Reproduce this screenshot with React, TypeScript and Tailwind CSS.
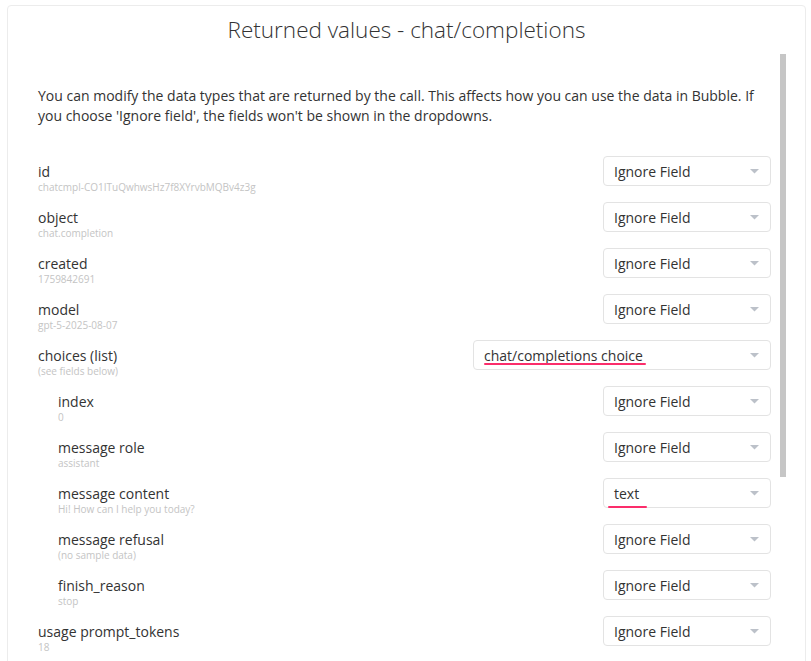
interface Field {
  label: string
  sample: string
  value: string
  nested?: boolean
  wide?: boolean
  mark?: string
}

const fields: Field[] = [
  { label: "id", sample: "chatcmpl-CO1ITuQwhwsHz7f8XYrvbMQBv4z3g", value: "Ignore Field" },
  { label: "object", sample: "chat.completion", value: "Ignore Field" },
  { label: "created", sample: "1759842691", value: "Ignore Field" },
  { label: "model", sample: "gpt-5-2025-08-07", value: "Ignore Field" },
  {
    label: "choices (list)",
    sample: "(see fields below)",
    value: "chat/completions choice",
    wide: true,
    mark: "left-[10px] top-[22px] w-[162px]",
  },
  { label: "index", sample: "0", value: "Ignore Field", nested: true },
  { label: "message role", sample: "assistant", value: "Ignore Field", nested: true },
  {
    label: "message content",
    sample: "Hi! How can I help you today?",
    value: "text",
    nested: true,
    mark: "left-[4px] top-[27px] w-[39px]",
  },
  { label: "message refusal", sample: "(no sample data)", value: "Ignore Field", nested: true },
  { label: "finish_reason", sample: "stop", value: "Ignore Field", nested: true },
  { label: "usage prompt_tokens", sample: "18", value: "Ignore Field" },
]

function Caret() {
  return (
    <svg width="9" height="5" viewBox="0 0 9 5" className="shrink-0">
      <path d="M0 0 L9 0 L4.5 4.5 Z" fill="#bcc1c9" />
    </svg>
  )
}

function Dropdown({ value, wide, mark }: { value: string; wide?: boolean; mark?: string }) {
  return (
    <div
      className={
        "relative h-[30px] flex items-center justify-between pl-[10px] pr-[11px] pt-[1px] border border-[#e3e3e3] rounded-[4px] bg-white " +
        (wide ? "w-[298px]" : "w-[168px]")
      }
    >
      <span className="text-[14px] text-[#333] leading-[20px]">{value}</span>
      <Caret />
      {/* spellcheck-style highlight */}
      {mark && <span className={"absolute h-[2px] rounded-full bg-[#fb2d6b] " + mark} />}
    </div>
  )
}

function Row({ field }: { field: Field }) {
  return (
    <div className="h-[46px] flex items-start justify-between">
      <div className={"pt-[7px] " + (field.nested ? "pl-[20px]" : "")}>
        <div className="text-[14px] leading-[18px] text-[#333]">{field.label}</div>
        <div className="text-[10px] leading-[12px] text-[#c4c4c4]">{field.sample}</div>
      </div>
      <Dropdown value={field.value} wide={field.wide} mark={field.mark} />
    </div>
  )
}

export default function App() {
  return (
    <div className="w-[811px] h-[661px] overflow-hidden bg-white pl-[7px] pt-[5px] pr-[5px] font-['Open_Sans',sans-serif]">
      <div className="h-[700px] border border-[#ececec] rounded-tl-[4px] rounded-tr-[4px] bg-white flex flex-col">
        <h1 className="text-center text-[22.5px] leading-[30px] font-light text-[#333] pt-[9px]">
          Returned values - chat/completions
        </h1>
        <div className="flex mt-[9px]">
          <div className="flex-1 pl-[30px] pr-[9px]">
            <p className="text-[14px] leading-[20px] text-[#333] pt-[32px] pb-[30px] pr-[8px]">
              You can modify the data types that are returned by the call. This affects how you can use the data in Bubble. If
              <br />
              you choose 'Ignore field', the fields won't be shown in the dropdowns.
            </p>
            {fields.map((f) => (
              <Row key={f.label} field={f} />
            ))}
          </div>
          <div className="w-[6px] h-[423px] bg-[#c6c6c6] mr-[19px]" />
        </div>
      </div>
    </div>
  )
}
